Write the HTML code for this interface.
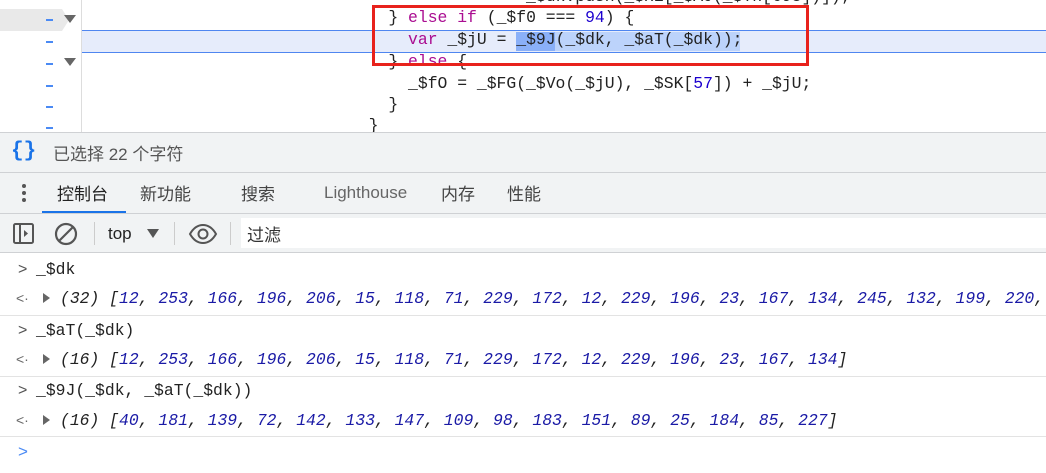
<!DOCTYPE html>
<html><head><meta charset="utf-8"><style>
*{margin:0;padding:0;box-sizing:border-box}
body{width:1046px;height:473px;overflow:hidden;background:#fff;position:relative;font-family:"Liberation Sans","Noto Sans CJK SC",sans-serif}
.abs{position:absolute}
.mono{font-family:"Liberation Mono","DejaVu Sans Mono",monospace;font-size:16.4px;white-space:pre}
.code{left:349px;color:#222}
.kw{color:#aa0d91}
.num{color:#1c00cf}
.dash{position:absolute;left:46px;width:7px;height:1.5px;background:#4a8af4}
.tri{position:absolute;left:64px;width:0;height:0;border-left:6px solid transparent;border-right:6px solid transparent;border-top:8px solid #666}
.cl{left:36px;color:#222;font-size:16.4px}
.out{left:60px;font-style:italic;color:#222}
.out b{font-weight:normal;color:#1a1aa6}
.sep{left:0;width:1046px;height:1px;background:#e3e3e3}
.tab{top:180px;font-size:17px;color:#444}
</style></head><body>
<!-- code area -->
<div class="abs" style="left:0;top:9px;width:62px;height:22px;background:#e9e9e9"></div>
<div class="abs" style="left:62px;top:9px;width:0;height:0;border-top:11px solid transparent;border-bottom:11px solid transparent;border-left:7px solid #e9e9e9"></div>
<div class="abs" style="left:81px;top:0;width:1px;height:132px;background:#ddd"></div>
<div class="abs" style="left:82px;top:30px;width:964px;height:23px;background:#e6ecfb;border-top:1px solid #4f86f0;border-bottom:1px solid #4f86f0"></div>
<span class="dash" style="top:19px"></span><div class="tri" style="top:15px"></div>
<span class="dash" style="top:41px"></span>
<span class="dash" style="top:63px"></span><div class="tri" style="top:58px"></div>
<span class="dash" style="top:85px"></span>
<span class="dash" style="top:106px"></span>
<span class="dash" style="top:127px"></span>
<div class="abs mono code" style="top:-13px">                  _$dk.push(_$xE[_$AJ(_$Th[698])]);</div>
<div class="abs mono code" style="top:8px">    } <span class="kw">else if</span> (_$f0 === <span class="num">94</span>) {</div>
<div class="abs" style="left:516px;top:32px;width:39px;height:19px;background:#8ab0f8"></div>
<div class="abs" style="left:555px;top:32px;width:185px;height:19px;background:#bcd3fb"></div>
<div class="abs mono code" style="top:30px">      <span class="kw">var</span> _$jU = _$9J(_$dk, _$aT(_$dk));</div>
<div class="abs mono code" style="top:52px">    } <span class="kw">else</span> {</div>
<div class="abs mono code" style="top:74px">      _$fO = _$FG(_$Vo(_$jU), _$SK[<span class="num">57</span>]) + _$jU;</div>
<div class="abs mono code" style="top:95px">    }</div>
<div class="abs mono code" style="top:116px">  }</div>
<div class="abs" style="left:372px;top:5px;width:437px;height:61px;border:3px solid #e8221c"></div>
<!-- status bar -->
<div class="abs" style="left:0;top:132px;width:1046px;height:121px;background:#f1f3f4"></div>
<div class="abs" style="left:0;top:132px;width:1046px;height:1px;background:#cfd1d4"></div>
<div class="abs" style="left:11px;top:140px;font-size:21px;font-weight:bold;color:#1a73e8;font-family:'Liberation Mono',monospace">{}</div>
<div class="abs" style="left:53px;top:140px;font-size:17px;color:#555">已选择 22 个字符</div>
<div class="abs" style="left:0;top:172px;width:1046px;height:1px;background:#cfd1d4"></div>
<!-- tabs -->
<div class="abs" style="left:22px;top:184px;width:4px;height:4px;border-radius:2px;background:#555;box-shadow:0 7px 0 #555,0 14px 0 #555"></div>
<div class="abs tab" style="left:57px;color:#222">控制台</div>
<div class="abs" style="left:42px;top:211px;width:84px;height:3px;background:#1a73e8"></div>
<div class="abs tab" style="left:140px">新功能</div>
<div class="abs tab" style="left:241px">搜索</div>
<div class="abs tab" style="left:324px;top:183px;color:#666">Lighthouse</div>
<div class="abs tab" style="left:441px">内存</div>
<div class="abs tab" style="left:507px">性能</div>
<div class="abs" style="left:0;top:213px;width:1046px;height:1px;background:#cfd1d4"></div>
<!-- toolbar -->
<svg class="abs" style="left:12px;top:222px" width="24" height="24" viewBox="0 0 24 24"><rect x="2" y="2" width="19" height="19" rx="1.5" fill="none" stroke="#555" stroke-width="2"/><line x1="8" y1="2" x2="8" y2="21" stroke="#555" stroke-width="2"/><path d="M12 8l4 3.5-4 3.5z" fill="#555"/></svg>
<svg class="abs" style="left:53px;top:221px" width="26" height="26" viewBox="0 0 26 26"><circle cx="13" cy="13" r="10" fill="none" stroke="#555" stroke-width="2.2"/><line x1="6" y1="20" x2="20" y2="6" stroke="#555" stroke-width="2.2"/></svg>
<div class="abs" style="left:94px;top:222px;width:1px;height:23px;background:#ccc"></div>
<div class="abs" style="left:108px;top:224px;font-size:17px;color:#222">top</div>
<div class="abs" style="left:147px;top:229px;width:0;height:0;border-left:6px solid transparent;border-right:6px solid transparent;border-top:9px solid #555"></div>
<div class="abs" style="left:174px;top:222px;width:1px;height:23px;background:#ccc"></div>
<svg class="abs" style="left:188px;top:224px" width="30" height="20" viewBox="0 0 30 20"><path d="M2 10C6 3 11 1 15 1s9 2 13 9c-4 7-9 9-13 9S6 17 2 10z" fill="none" stroke="#555" stroke-width="2"/><circle cx="15" cy="10" r="4.5" fill="none" stroke="#555" stroke-width="2"/></svg>
<div class="abs" style="left:230px;top:222px;width:1px;height:23px;background:#ccc"></div>
<div class="abs" style="left:241px;top:218px;width:805px;height:30px;background:#fff"></div>
<div class="abs" style="left:247px;top:221px;font-size:17px;color:#333">过滤</div>
<div class="abs" style="left:0;top:252px;width:1046px;height:1px;background:#cfd1d4"></div>
<!-- console -->
<div class="abs" style="left:18px;top:261px;color:#555;font-size:16px">&gt;</div>
<div class="abs mono cl" style="top:260px">_$dk</div>
<div class="abs" style="left:16px;top:290px;color:#666;font-size:14px">&lt;·</div>
<div class="abs" style="left:43px;top:293px;border-top:5px solid transparent;border-bottom:5px solid transparent;border-left:7px solid #666"></div>
<div class="abs mono out" style="top:289px">(32) [<b>12</b>, <b>253</b>, <b>166</b>, <b>196</b>, <b>206</b>, <b>15</b>, <b>118</b>, <b>71</b>, <b>229</b>, <b>172</b>, <b>12</b>, <b>229</b>, <b>196</b>, <b>23</b>, <b>167</b>, <b>134</b>, <b>245</b>, <b>132</b>, <b>199</b>, <b>220</b>,</div>
<div class="abs sep" style="top:315px"></div>
<div class="abs" style="left:18px;top:322px;color:#555;font-size:16px">&gt;</div>
<div class="abs mono cl" style="top:321px">_$aT(_$dk)</div>
<div class="abs" style="left:16px;top:351px;color:#666;font-size:14px">&lt;·</div>
<div class="abs" style="left:43px;top:354px;border-top:5px solid transparent;border-bottom:5px solid transparent;border-left:7px solid #666"></div>
<div class="abs mono out" style="top:350px">(16) [<b>12</b>, <b>253</b>, <b>166</b>, <b>196</b>, <b>206</b>, <b>15</b>, <b>118</b>, <b>71</b>, <b>229</b>, <b>172</b>, <b>12</b>, <b>229</b>, <b>196</b>, <b>23</b>, <b>167</b>, <b>134</b>]</div>
<div class="abs sep" style="top:376px"></div>
<div class="abs" style="left:18px;top:382px;color:#555;font-size:16px">&gt;</div>
<div class="abs mono cl" style="top:381px">_$9J(_$dk, _$aT(_$dk))</div>
<div class="abs" style="left:16px;top:412px;color:#666;font-size:14px">&lt;·</div>
<div class="abs" style="left:43px;top:415px;border-top:5px solid transparent;border-bottom:5px solid transparent;border-left:7px solid #666"></div>
<div class="abs mono out" style="top:411px">(16) [<b>40</b>, <b>181</b>, <b>139</b>, <b>72</b>, <b>142</b>, <b>133</b>, <b>147</b>, <b>109</b>, <b>98</b>, <b>183</b>, <b>151</b>, <b>89</b>, <b>25</b>, <b>184</b>, <b>85</b>, <b>227</b>]</div>
<div class="abs sep" style="top:436px"></div>
<div class="abs" style="left:18px;top:442px;color:#4a8af4;font-size:17px">&gt;</div>
</body></html>
